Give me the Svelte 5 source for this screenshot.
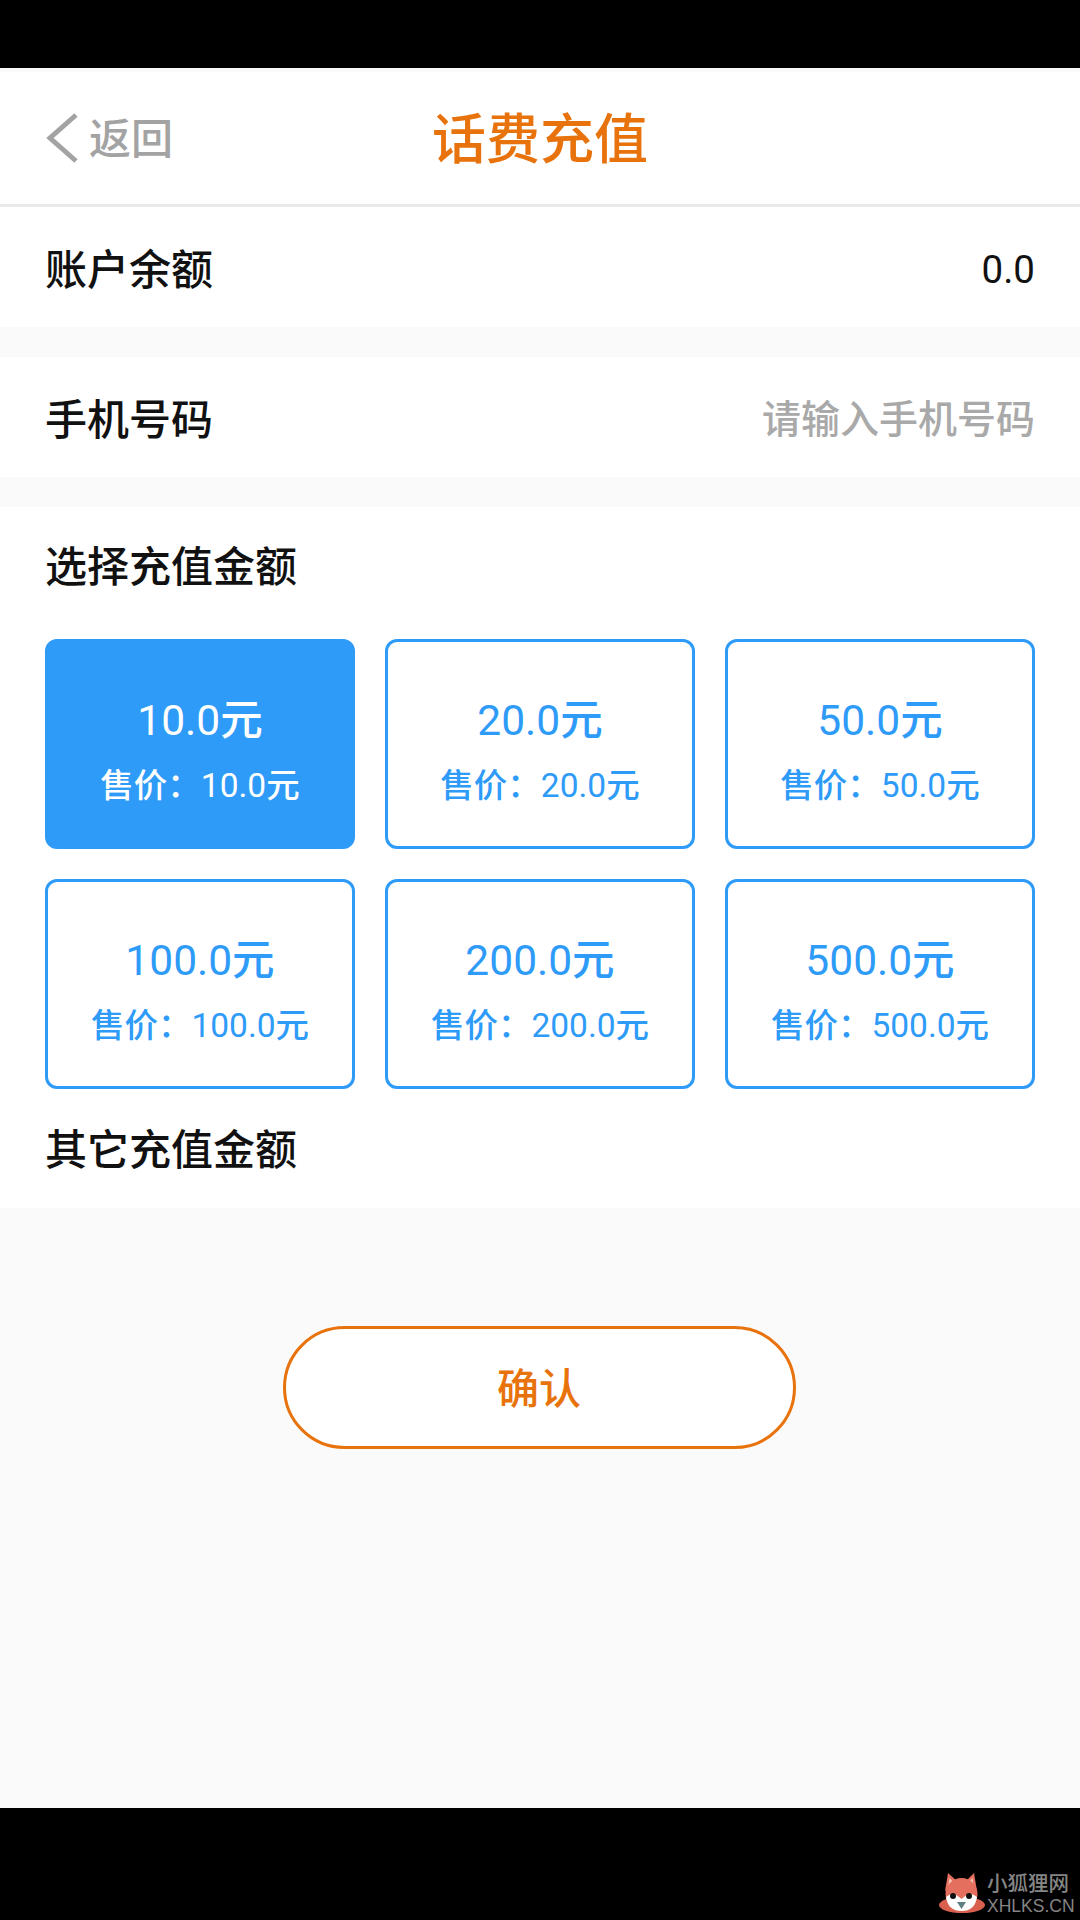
<script>
  const amounts = ['10.0', '20.0', '50.0', '100.0', '200.0', '500.0'];
  let selected = $state('10.0');
</script>

<div class="screen">
  <div class="black top"></div>
  <main>
    <header>
      <button class="back">
        <svg width="34" height="52" viewBox="0 0 34 52">
          <path d="M31 3 L5 26 L31 49" fill="none" stroke="#a3a3a3" stroke-width="5" />
        </svg>
        <span>返回</span>
      </button>
      <h1>话费充值</h1>
    </header>

    <div class="row">
      <span class="label">账户余额</span>
      <span class="balance">0.0</span>
    </div>

    <div class="row">
      <span class="label">手机号码</span>
      <span class="placeholder">请输入手机号码</span>
    </div>

    <section>
      <h2>选择充值金额</h2>
      <div class="grid">
        {#each amounts as a}
          <button class="card" class:active={selected === a} onclick={() => (selected = a)}>
            <span class="amount">{a}<b>元</b></span>
            <span class="price"><b>售价：</b>{a}<b>元</b></span>
          </button>
        {/each}
      </div>
      <h2 class="other">其它充值金额</h2>
    </section>

    <div class="actions">
      <button class="confirm">确认</button>
    </div>
  </main>
  <footer class="black">
    <div class="mark">
      <svg width="46" height="42" viewBox="0 0 46 42">
        <ellipse cx="23" cy="32" rx="23" ry="8" fill="#d9604f" />
        <path d="M6 18 L9 0 L19 9 Z M38 18 L35 0 L26 9 Z" fill="#e56f5e" />
        <path d="M9 14 L10.5 5 L15 10 Z M35 14 L33.5 5 L29 10 Z" fill="#f3c4b6" />
        <circle cx="22.5" cy="21" r="16" fill="#e56f5e" />
        <path d="M7 24 Q14 18 20 24 L22.5 26 L25 24 Q31 18 38 24 Q36 38 22.5 38 Q9 38 7 24 Z" fill="#fff" />
        <circle cx="14" cy="23" r="3" fill="#111" />
        <circle cx="30" cy="23" r="3" fill="#111" />
        <path d="M18 29 L27 29 L22.5 36 Z" fill="#5f7f80" />
      </svg>
      <div class="mark-text">
        <span class="cn">小狐狸网</span>
        <span class="en">XHLKS.CN</span>
      </div>
    </div>
  </footer>
</div>

<style>
  :global(body) {
    margin: 0;
    font-family: Roboto, "Noto Sans CJK SC", sans-serif;
  }
  button { font-family: inherit; padding: 0; cursor: pointer; }
  b { font-weight: 500; }
  .screen { width: 1080px; height: 1920px; display: flex; flex-direction: column; background: #fafafa; }
  .black { background: #000; }
  .top { height: 68px; flex-shrink: 0; }
  main { flex: 1; display: flex; flex-direction: column; padding-top: 4px; }
  footer { height: 112px; flex-shrink: 0; display: flex; justify-content: flex-end; align-items: flex-end; }

  header {
    position: relative;
    height: 127px;
    padding-bottom: 5px;
    background: #fff;
    border-bottom: 3px solid #e9e9e9;
    display: flex; align-items: center; justify-content: center;
  }
  .back {
    position: absolute; left: 45px; top: 40px;
    display: flex; align-items: center; gap: 10px;
    background: none; border: none;
    color: #a3a3a3; font-size: 42px; line-height: 52px; font-weight: 500;
  }
  .back span { position: relative; top: 2px; }
  h1 { margin: 0; color: #e8730c; font-size: 54px; font-weight: 500; }

  .row {
    height: 120px;
    background: #fff;
    padding: 0 45px;
    display: flex; align-items: center; justify-content: space-between;
    font-size: 42px; color: #111;
    margin-bottom: 30px;
  }
  .label { font-weight: 500; position: relative; top: -1px; }
  .balance { font-size: 38.5px; position: relative; top: 2px; }
  .placeholder { font-size: 39px; color: #a9a9a9; font-weight: 500; position: relative; top: -1px; }

  section { background: #fff; padding: 0 45px; height: 701px; box-sizing: border-box; }
  h2 { margin: 0; font-size: 42px; font-weight: 500; color: #111; line-height: 122px; height: 132px; }
  .grid { display: grid; grid-template-columns: repeat(3, 310px); gap: 30px; }
  .card {
    height: 210px;
    box-sizing: border-box;
    border: 3px solid #2e9bf9;
    border-radius: 12px;
    background: #fff;
    color: #2e9bf9;
    display: flex; flex-direction: column; align-items: center; justify-content: center;
    padding-top: 12px;
  }
  .card.active { background: #2e9bf9; color: #fff; }
  .amount { font-size: 42.5px; line-height: 56px; }
  .price { font-size: 33.5px; line-height: 44px; margin-top: 15px; }
  .other { line-height: 64px; height: 54px; margin-top: 30px; }

  .actions { display: flex; justify-content: center; padding-top: 118px; padding-right: 2px; }
  .confirm {
    width: 513px; height: 123px;
    box-sizing: border-box;
    border: 3px solid #e8730c;
    border-radius: 62px;
    background: #fff;
    color: #e8730c;
    font-size: 42px;
    font-weight: 500;
    padding-bottom: 4px;
  }

  .mark { display: flex; align-items: flex-end; gap: 2px; padding: 0 9px 5px 0; }
  .mark-text { display: flex; flex-direction: column; color: #858585; width: 84px; }
  .cn { font-size: 20.5px; line-height: 25px; font-weight: 500; }
  .en { font-size: 17.5px; line-height: 18px; font-family: "Liberation Sans", sans-serif; }
</style>
